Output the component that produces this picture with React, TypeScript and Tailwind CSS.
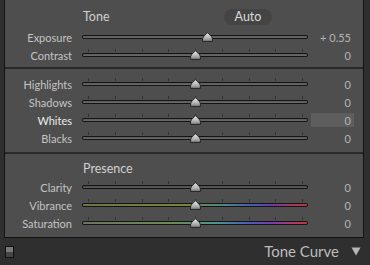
import React from 'react';

type RowProps = {
  label: string;
  value: string;
  pos: number;
  ticks?: boolean;
  bright?: boolean;
  active?: boolean;
  track?: string;
};

const TICKS = [0, 1, 2, 3, 4, 5, 6, 7, 8];

function Thumb() {
  return (
    <svg width="11" height="10" viewBox="0 0 11 10">
      <defs>
        <linearGradient id="tg" x1="0" y1="0" x2="0" y2="1">
          <stop offset="0" stopColor="#ececec" />
          <stop offset="0.6" stopColor="#b4b4b4" />
          <stop offset="1" stopColor="#7c7c7c" />
        </linearGradient>
      </defs>
      <path
        d="M5.5 0.6 C6.4 2.2 10.4 4.2 10.4 6.8 L10.4 9.4 L0.6 9.4 L0.6 6.8 C0.6 4.2 4.6 2.2 5.5 0.6 Z"
        fill="url(#tg)"
        stroke="#1c1c1c"
        strokeWidth="0.9"
      />
    </svg>
  );
}

function Row({ label, value, pos, ticks = true, bright, active, track }: RowProps) {
  return (
    <div className="flex h-[18px] items-center">
      <div
        className={`w-[67px] text-right text-[11px] leading-none ${bright ? 'text-[#ececec]' : 'text-[#c4c4c4]'}`}
      >
        {label}
      </div>
      <div className="relative ml-[10px] h-full w-[226px]">
        {ticks &&
          TICKS.map((i) => (
            <div
              key={i}
              className="absolute top-[3px] h-[3px] w-px bg-[#333333]"
              style={{ left: 6 + i * 26.75 }}
            />
          ))}
        <div className="absolute left-0 right-0 top-[7px] h-[4px] rounded-full bg-[#141414] px-[1px] pt-[1px]">
          <div
            className="h-[2px] rounded-full"
            style={{ background: track ?? 'linear-gradient(#5a5a5a, #6c6c6c)' }}
          />
        </div>
        <div className="absolute top-[4px]" style={{ left: pos - 5 }}>
          <Thumb />
        </div>
      </div>
      <div
        className={`ml-[3px] flex h-[14px] w-[43px] items-center justify-end pr-[3px] text-[11px] leading-none text-[#b4b4b4] ${active ? 'bg-[#5d5d5d]' : ''}`}
      >
        {value}
      </div>
    </div>
  );
}

function Divider() {
  return <div className="h-[2px] bg-[#2a2a2a]" />;
}

export default function App() {
  const vibrance =
    'linear-gradient(90deg, #6e7446 0%, #77843f 45%, #4f8a7c 62%, #4a5ab8 76%, #6a3aa8 84%, #a83a5a 94%, #b83a3a 100%)';
  const saturation =
    'linear-gradient(90deg, #6b7660 0%, #6e8a55 40%, #4a9a8a 58%, #4a5cc0 74%, #7a3ab0 84%, #b03a6a 94%, #b83a3a 100%)';

  return (
    <div
      className="h-[265px] w-[370px] overflow-hidden bg-[#2f2f2f]"
      style={{ fontFamily: 'Lato, "Open Sans", sans-serif' }}
    >
      <div className="ml-[4px] h-[238px] w-[360px] border-x border-b border-[#141414] bg-[#4e4e4e]">
        {/* Tone */}
        <div className="h-[67px] pt-[8px]">
          <div className="flex h-[18px] items-center">
            <div className="ml-[78px] w-[141px] text-[12.5px] text-[#d0d0d0]">Tone</div>
            <div className="flex h-[16px] w-[48px] items-center justify-center rounded-full bg-[#444444] text-[12.5px] text-[#dadada]">
              Auto
            </div>
          </div>
          <div className="mt-[2px]">
            <Row label="Exposure" value="+ 0.55" pos={125} ticks={false} />
            <Row label="Contrast" value="0" pos={113} />
          </div>
        </div>
        <Divider />
        {/* Tone adjustments */}
        <div className="h-[83px] pt-[6px]">
          <Row label="Highlights" value="0" pos={113} />
          <Row label="Shadows" value="0" pos={113} />
          <Row label="Whites" value="0" pos={113} bright active />
          <Row label="Blacks" value="0" pos={113} />
        </div>
        <Divider />
        {/* Presence */}
        <div className="pt-[7px]">
          <div className="flex h-[17px] items-center">
            <div className="ml-[78px] text-[12.5px] text-[#d0d0d0]">Presence</div>
          </div>
          <Row label="Clarity" value="0" pos={113} track="linear-gradient(#4c4c4c, #5e5e5e)" />
          <Row label="Vibrance" value="0" pos={113} track={vibrance} />
          <Row label="Saturation" value="0" pos={113} track={saturation} />
        </div>
      </div>
      <div className="flex h-[27px] items-center">
        <div className="ml-[5px] flex h-[12px] w-[9px] flex-col border border-[#111111]">
          <div className="h-1/2 bg-[#7a7a7a]" />
          <div className="h-1/2 bg-[#454545]" />
        </div>
        <div className="ml-auto text-[15px] text-[#bcbcbc]">Tone Curve</div>
        <svg className="ml-[12px] mr-[9px]" width="10" height="9" viewBox="0 0 10 9">
          <path d="M0.5 0.5 L9.5 0.5 L5 8.5 Z" fill="#b8b8b8" />
        </svg>
      </div>
    </div>
  );
}
